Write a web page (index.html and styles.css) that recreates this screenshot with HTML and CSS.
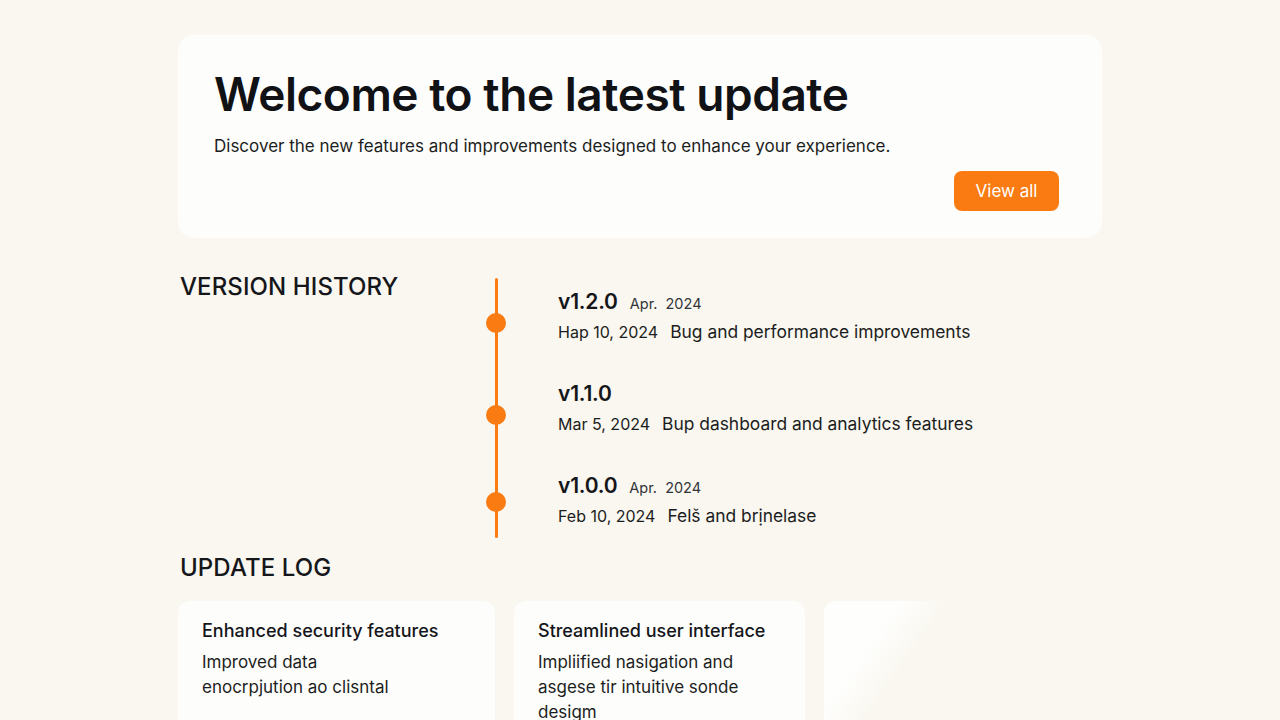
FILE: index.html
```html
<!DOCTYPE html>
<html lang="en">
<head>
<meta charset="utf-8">
<title>What's new</title>
<link rel="stylesheet" href="styles.css">
</head>
<body>
<main class="page">
  <section class="hero">
    <h1 class="hero-title">Welcome to the latest update</h1>
    <p class="hero-text">Discover the new features and improvements designed to enhance your experience.</p>
    <div class="hero-actions">
      <button class="btn-primary" type="button">View all</button>
    </div>
  </section>

  <section class="history">
    <h2 class="section-title">VERSION HISTORY</h2>
    <ol class="timeline">
      <li class="release">
        <div class="release-head"><span class="version">v1.2.0</span><span class="month">Apr.&nbsp; 2024</span></div>
        <div class="release-body"><span class="date">Hap 10, 2024</span><span class="note">Bug and performance improvements</span></div>
      </li>
      <li class="release">
        <div class="release-head"><span class="version">v1.1.0</span></div>
        <div class="release-body"><span class="date">Mar 5, 2024</span><span class="note">Bup dashboard and analytics features</span></div>
      </li>
      <li class="release release-last">
        <div class="release-head"><span class="version">v1.0.0</span><span class="month">Apr.&nbsp; 2024</span></div>
        <div class="release-body"><span class="date">Feb 10, 2024</span><span class="note">Fel&#x0161; and bri&#x0323;nelase</span></div>
      </li>
    </ol>
  </section>

  <section class="log">
    <h2 class="section-title">UPDATE LOG</h2>
    <div class="log-grid">
      <article class="log-card">
        <h3 class="log-title">Enhanced security features</h3>
        <p class="log-text">Improved data<br>enocrpjution ao clisntal</p>
      </article>
      <article class="log-card">
        <h3 class="log-title">Streamlined user interface</h3>
        <p class="log-text">Impliified nasigation and asgese tir intuitive sonde desigm</p>
      </article>
      <article class="log-card log-card-fade"></article>
    </div>
  </section>
</main>
</body>
</html>
```

FILE: styles.css
```css
* { box-sizing: border-box; }

html, body {
  margin: 0;
  height: 100%;
  overflow: hidden;
}

body {
  background: #f9f7ef;
  color: #15161a;
  font-family: Inter, "Noto Sans", "Liberation Sans", sans-serif;
}

.page {
  width: 924px;
  margin: 0 auto;
  padding-top: 35px;
}

/* Intro card */
.hero {
  background: #fdfdfc;
  border-radius: 16px;
  padding: 31px 43px 27px 36px;
}

.hero-title {
  margin: 0;
  font-size: 46px;
  line-height: 56px;
  font-weight: 600;
  letter-spacing: -0.45px;
  color: #111215;
}

.hero-text {
  margin: 11px 0 0;
  font-size: 17px;
  line-height: 26px;
  color: #1c1d21;
}

.hero-actions {
  display: flex;
  justify-content: flex-end;
  margin-top: 12px;
}

.btn-primary {
  width: 105px;
  height: 40px;
  border: 0;
  border-radius: 8px;
  background: #f97b12;
  color: #fff;
  font: 400 17px/40px Inter, "Noto Sans", "Liberation Sans", sans-serif;
  padding: 0;
}

/* Version history */
.section-title {
  margin: 0;
  font-size: 24px;
  line-height: 30px;
  font-weight: 500;
  letter-spacing: 0.1px;
  color: #15161a;
}

.history {
  display: grid;
  grid-template-columns: 300px 1fr;
  margin-top: 34px;
  padding-left: 2px;
}

.timeline {
  list-style: none;
  margin: 6px 0 0;
  padding: 9px 0 7px 78px;
  position: relative;
}

.timeline::before {
  content: "";
  position: absolute;
  left: 15px;
  top: 0;
  bottom: 0;
  width: 3px;
  border-radius: 2px;
  background: #f97b12;
}

.release {
  position: relative;
  margin-bottom: 32px;
}

.release-last { margin-bottom: 0; }

.release::before {
  content: "";
  position: absolute;
  left: -72px;
  top: 26px;
  width: 20px;
  height: 20px;
  border-radius: 50%;
  background: #f97b12;
}

.release-last::before { top: 21px; }

.release-head,
.release-body {
  display: flex;
  align-items: baseline;
  height: 30px;
  line-height: 30px;
  white-space: nowrap;
}

.version {
  font-size: 21px;
  font-weight: 600;
  letter-spacing: -0.2px;
  margin-right: 12px;
}

.month {
  font-size: 14.5px;
  color: #33353a;
}

.date {
  font-size: 16px;
  color: #1c1d21;
  margin-right: 12px;
}

.note {
  font-size: 17.4px;
  color: #1c1d21;
}

/* Update log */
.log {
  margin-top: 15px;
  padding-left: 2px;
}

.log-grid {
  display: grid;
  grid-template-columns: 317px 291px 277px;
  gap: 19px;
  margin: 18px 0 0 -2px;
}

.log-card {
  background: #fdfdfc;
  border-radius: 12px;
  padding: 17px 24px 0;
  height: 140px;
}

.log-card-fade {
  background: linear-gradient(125deg, #fefefd 0%, #fefefd 20%, rgba(254, 254, 253, 0) 34%);
}

.log-title {
  margin: 0;
  font-size: 18px;
  line-height: 26px;
  font-weight: 500;
  color: #15161a;
}

.log-text {
  margin: 6px 0 0;
  font-size: 17px;
  line-height: 25px;
  color: #1c1d21;
  max-width: 240px;
}
```
